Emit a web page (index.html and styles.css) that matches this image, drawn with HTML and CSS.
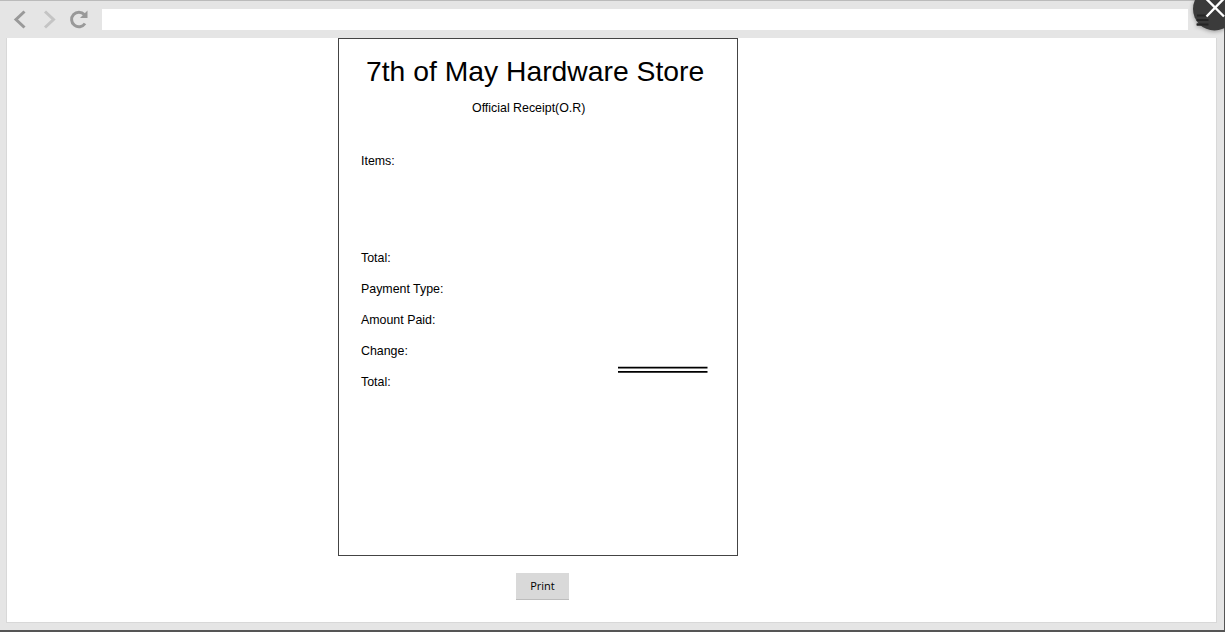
FILE: index.html
```html
<!DOCTYPE html>
<html lang="en">
<head>
<meta charset="utf-8">
<title>Official Receipt</title>
<link rel="stylesheet" href="styles.css">
</head>
<body>
<div class="browser">
  <header class="toolbar">
    <svg class="nav" width="102" height="37" viewBox="0 1 102 37" fill="none">
      <path d="M24.500 11.500 16 19.500l8.500 8" stroke="#999" stroke-width="3"/>
      <path d="M45 11.500l8.500 8-8.500 8" stroke="#c4c4c4" stroke-width="3"/>
      <path d="M84.300 14.500A7.300 7.300 0 1 0 85 23.500" stroke="#999" stroke-width="3"/>
      <path d="M87.500 10.500v7.500h-7.500z" fill="#999"/>
    </svg>
    <div class="address"></div>
  </header>
  <main class="page">
    <section class="receipt">
      <h1 class="title">7th of May Hardware Store</h1>
      <p class="subtitle">Official Receipt(O.R)</p>
      <p class="items">Items:</p>
      <div class="summary">
        <div class="labels">
          <p>Total:</p>
          <p>Payment Type:</p>
          <p>Amount Paid:</p>
          <p>Change:</p>
          <p>Total:</p>
        </div>
        <svg class="rule" width="92" height="8" viewBox="0 0 92 8"><path d="M1 1.700h89.500M1 5.900h89.500" stroke="#000" stroke-width="1.700"/></svg>
      </div>
    </section>
    <button class="print">Print</button>
  </main>
</div>
<svg class="close" width="40" height="40" viewBox="0 0 40 40">
  <path d="M11.500 15.500h12M11.500 20h12M11.500 24.500h12" stroke="#252525" stroke-width="2"/>
  <circle cx="29.500" cy="9" r="21.500" fill="#3b3b3b"/>
  <path d="M12 15.500h11.500M12 20h11.500M12 24.500h11.500" stroke="#252525" stroke-width="2"/>
  <path d="M21.500-1l17.500 17.500M38.500-1 21.500 16.500" stroke="#fff" stroke-width="2.400"/>
</svg>
</body>
</html>
```
FILE: styles.css
```css
* { box-sizing: border-box; }
body {
  margin: 0;
  width: 1225px;
  height: 632px;
  overflow: hidden;
  position: relative;
  background: #555;
  font-family: "Liberation Sans", Arial, sans-serif;
  color: #000;
}
h1, p { margin: 0; font-weight: 400; }
.browser {
  width: 1224px;
  height: 630px;
  background: #e5e5e5;
  border-top: 1px solid #bbb;
}
.toolbar { display: flex; height: 37px; }
.nav { flex: none; }
.address { width: 1086px; height: 21px; margin-top: 8px; background: #fff; }
.page {
  width: 1211px;
  height: 585px;
  margin-left: 6px;
  padding-left: 332px;
  background: #fff;
  border: 1px solid #d8d8d8;
  border-top: 0;
}
.receipt {
  width: 400px;
  height: 518px;
  margin-left: -1px;
  padding: 14px 22px 0;
  border: 1px solid #444;
  font-size: 12.4px;
  line-height: 31px;
}
.title {
  margin-left: 5px;
  font-size: 28.3px;
  line-height: 36px;
  white-space: nowrap;
}
.subtitle { margin: 1px 0 0 111px; line-height: 36px; }
.items { margin-top: 20px; }
.summary { display: flex; justify-content: space-between; margin-top: 66px; }
.rule { margin: 123px 6px 0 0; }
.print {
  display: block;
  width: 53px;
  height: 27px;
  margin: 17px 0 0 177px;
  padding: 0 0 2px;
  background: #d9d9d9;
  border: 0;
  border-bottom: 1px solid #bdbdbd;
  font: 11px "Open Sans", sans-serif;
  color: #000;
}
.close {
  position: absolute;
  top: 0;
  right: 0;
  width: 40px;
  height: 40px;
  filter: drop-shadow(0 1px 2px rgba(0, 0, 0, .35));
}
```
